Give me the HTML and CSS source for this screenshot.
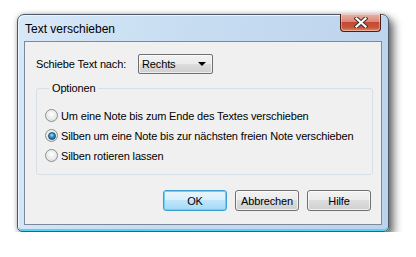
FILE: index.html
```html
<!DOCTYPE html>
<html lang="de">
<head>
    <meta charset="UTF-8">
    <meta name="viewport" content="width=device-width, initial-scale=1.0">
    <title>Text verschieben</title>
    <link rel="stylesheet" href="styles.css">
</head>
<body>
    <!-- Dialogfenster -->
    <div class="window">
        <div class="titlebar">
            <span class="title">Text verschieben</span>
            <button class="close" title="Schließen">
                <svg width="14" height="11" viewBox="0 0 14 11">
                    <path d="M2.5 1.5 L11.5 9.5 M11.5 1.5 L2.5 9.5" stroke="#3a3030" stroke-width="4.2" stroke-linecap="square"/>
                    <path d="M2.5 1.5 L11.5 9.5 M11.5 1.5 L2.5 9.5" stroke="#fff" stroke-width="2.2" stroke-linecap="square"/>
                </svg>
            </button>
        </div>
        <div class="client">
            <div class="row">
                <label for="richtung">Schiebe Text nach:</label>
                <div class="select" id="richtung">
                    <span>Rechts</span>
                    <span class="arrow"></span>
                </div>
            </div>
            <fieldset class="group">
                <legend>Optionen</legend>
                <label class="radio"><span class="dot"></span>Um eine Note bis zum Ende des Textes verschieben</label>
                <label class="radio"><span class="dot checked"></span>Silben um eine Note bis zur nächsten freien Note verschieben</label>
                <label class="radio"><span class="dot"></span>Silben rotieren lassen</label>
            </fieldset>
            <div class="buttons">
                <button class="btn default">OK</button>
                <button class="btn">Abbrechen</button>
                <button class="btn">Hilfe</button>
            </div>
        </div>
    </div>
</body>
</html>
```

FILE: styles.css
```css
/* Seite */
body {
    margin: 0;
    padding: 14px 0 0 17px;
    background: #fff;
    font-family: "Liberation Sans", Arial, sans-serif;
    font-size: 11px;
    letter-spacing: -0.15px;
    color: #000;
    white-space: nowrap;
}
/* Fensterrahmen (Vista-Glas) */
.window {
    width: 372px;
    border: 1px solid #4a5868;
    border-radius: 7px 7px 5px 5px;
    background: linear-gradient(100deg, #d7e8f8 0%, #c6dcf1 45%, #bcd3ec 100%);
    box-shadow: 5px 5px 8px rgba(0, 0, 0, 0.55), 0 0 5px rgba(0, 0, 0, 0.25), inset 1px 1px 0 #eef6fd, inset 0 -2px 0 #55d2f5;
    padding: 0 6px 6px 6px;
    box-sizing: border-box;
}
/* Titelleiste */
.titlebar {
    height: 26px;
    display: flex;
    justify-content: space-between;
    align-items: flex-start;
}
.title {
    font-size: 12px;
    letter-spacing: 0;
    margin: 7px 0 0 1px;
}
.close {
    width: 41px;
    height: 18px;
    margin: -1px 1px 0 0;
    padding: 0;
    border: 1px solid #4b1d16;
    border-top: none;
    border-radius: 0 0 4px 4px;
    background: linear-gradient(#e8b1a6 0%, #d9877a 45%, #c44a32 50%, #c8553c 80%, #e08d6e 100%);
    box-shadow: inset 0 0 0 1px rgba(255, 255, 255, 0.35);
    display: flex;
    align-items: center;
    justify-content: center;
}
/* Innenbereich */
.client {
    background: #f0f0f0;
    border: 1px solid #7a8a9c;
    padding: 12px 8px 13px 11px;
}
.row {
    display: flex;
    align-items: center;
    gap: 12px;
}
/* Auswahlfeld */
.select {
    width: 64px;
    height: 18px;
    border: 1px solid #707070;
    border-radius: 2px;
    background: linear-gradient(#f2f2f2 0%, #ebebeb 50%, #dddddd 50%, #cfcfcf 100%);
    box-shadow: inset 0 0 0 1px rgba(255, 255, 255, 0.6);
    display: flex;
    align-items: center;
    justify-content: space-between;
    padding: 0 6px 0 3px;
}
.arrow {
    width: 0;
    height: 0;
    border-left: 4px solid transparent;
    border-right: 4px solid transparent;
    border-top: 4px solid #000;
}
/* Gruppe "Optionen" */
.group {
    margin: 8px 0 0 0;
    padding: 11px 8px 9px 8px;
    border: 1px solid #d5dfe5;
    border-radius: 3px;
    display: flex;
    flex-direction: column;
    gap: 1px;
}
.group legend {
    padding: 0 3px;
    margin-left: 4px;
    line-height: 13px;
}
.radio {
    height: 19px;
    display: flex;
    align-items: center;
    gap: 3px;
}
.dot {
    width: 11px;
    height: 11px;
    border: 1px solid #8e9090;
    border-radius: 50%;
    background: radial-gradient(circle at 50% 40%, #ffffff 0%, #eaeaea 55%, #cfcfcf 100%);
    display: flex;
    align-items: center;
    justify-content: center;
}
.dot.checked::after {
    content: "";
    width: 6px;
    height: 6px;
    border-radius: 50%;
    border: 0.5px solid #1a4d72;
    background: radial-gradient(circle at 45% 35%, #a9e3fb 0%, #2b8fc9 45%, #0a4f82 100%);
}
/* Schaltflächen */
.buttons {
    display: flex;
    justify-content: flex-end;
    gap: 8px;
    margin-top: 15px;
    padding-right: 2px;
}
.btn {
    width: 64px;
    height: 21px;
    padding: 0;
    font-family: inherit;
    font-size: 11px;
    letter-spacing: -0.15px;
    color: #000;
    border: 1px solid #707070;
    border-radius: 3px;
    background: linear-gradient(#f2f2f2 0%, #ebebeb 50%, #dddddd 50%, #cfcfcf 100%);
    box-shadow: inset 0 0 0 1px rgba(255, 255, 255, 0.7);
}
.btn.default {
    border-color: #3c9fd2;
    background: linear-gradient(#e8f5fc 0%, #d8effb 50%, #bde6fd 50%, #a6d9f4 100%);
    box-shadow: inset 0 0 0 1px #6fd0f5;
}
```
